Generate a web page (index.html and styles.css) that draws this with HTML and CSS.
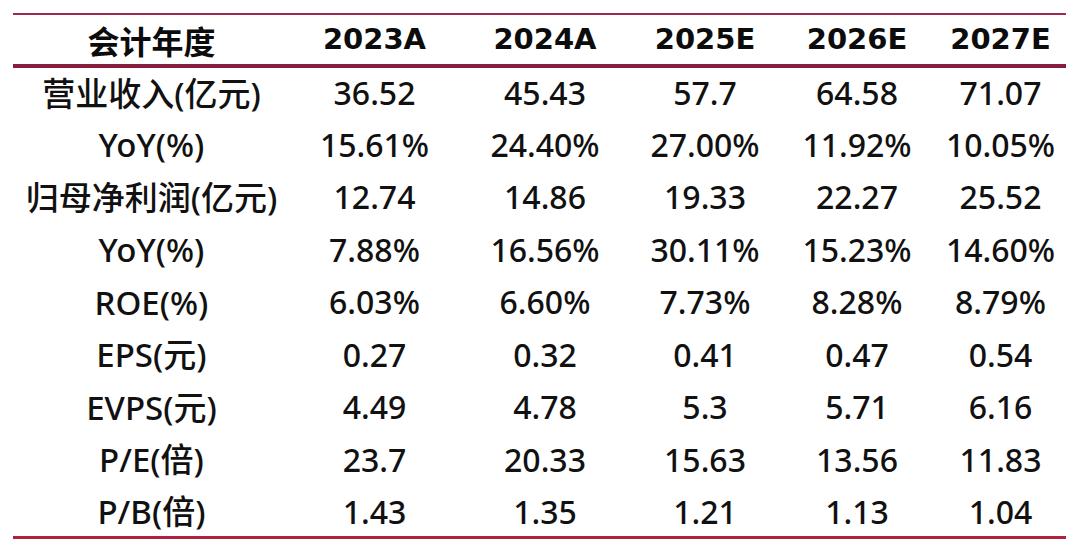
FILE: index.html
```html
<!DOCTYPE html>
<html lang="zh">
<head>
<meta charset="utf-8">
<link rel="stylesheet" href="styles.css">
</head>
<body>
<table class="fin">
  <colgroup>
    <col class="c-label"><col class="c1"><col class="c2"><col class="c3"><col class="c4"><col class="c5">
  </colgroup>
  <thead>
    <tr><th class="h-label">会计年度</th><th>2023A</th><th>2024A</th><th>2025E</th><th>2026E</th><th>2027E</th></tr>
  </thead>
  <tbody>
    <tr><td>营业收入(亿元)</td><td>36.52</td><td>45.43</td><td>57.7</td><td>64.58</td><td>71.07</td></tr>
    <tr><td>YoY(%)</td><td>15.61%</td><td>24.40%</td><td>27.00%</td><td>11.92%</td><td>10.05%</td></tr>
    <tr><td>归母净利润(亿元)</td><td>12.74</td><td>14.86</td><td>19.33</td><td>22.27</td><td>25.52</td></tr>
    <tr><td>YoY(%)</td><td>7.88%</td><td>16.56%</td><td>30.11%</td><td>15.23%</td><td>14.60%</td></tr>
    <tr><td>ROE(%)</td><td>6.03%</td><td>6.60%</td><td>7.73%</td><td>8.28%</td><td>8.79%</td></tr>
    <tr><td>EPS(元)</td><td>0.27</td><td>0.32</td><td>0.41</td><td>0.47</td><td>0.54</td></tr>
    <tr><td>EVPS(元)</td><td>4.49</td><td>4.78</td><td>5.3</td><td>5.71</td><td>6.16</td></tr>
    <tr><td>P/E(倍)</td><td>23.7</td><td>20.33</td><td>15.63</td><td>13.56</td><td>11.83</td></tr>
    <tr class="last"><td>P/B(倍)</td><td>1.43</td><td>1.35</td><td>1.21</td><td>1.13</td><td>1.04</td></tr>
  </tbody>
</table>
</body>
</html>
```
FILE: styles.css
```css
html, body {
  margin: 0;
  padding: 0;
  background: #ffffff;
}
body {
  padding: 13px 14px 0 13px;
  font-family: "Noto Sans", "Noto Sans CJK SC", sans-serif;
  color: #111111;
}
.fin {
  width: 1053px;
  border-collapse: collapse;
  table-layout: fixed;
  border-top: 2px solid #9a2b4b;
  border-bottom: 3px solid #b1203f;
}
.c-label { width: 277px; }
.c1 { width: 169px; }
.c2 { width: 172px; }
.c3 { width: 148px; }
.c4 { width: 156px; }
.c5 { width: 131px; }
.fin th, .fin td {
  padding: 0;
  text-align: center;
  white-space: nowrap;
  line-height: 1;
}
.fin th {
  height: 49px;
  font-family: "DejaVu Sans", "Noto Sans CJK SC", sans-serif;
  font-size: 29px;
  font-weight: 700;
  color: #0c0c0c;
  border-bottom: 4px solid #861c3e;
}
.fin th.h-label {
  font-family: "Noto Sans CJK SC", sans-serif;
  font-size: 32px;
  font-weight: 700;
}
.fin td {
  height: 52.5px;
  padding-top: 0;
  box-sizing: border-box;
  font-size: 32px;
  font-weight: 500;
}
.fin td:first-child {
  font-size: 33px;
}
.fin tr.last td {
  height: 51px;
  padding-top: 2px;
}
```
